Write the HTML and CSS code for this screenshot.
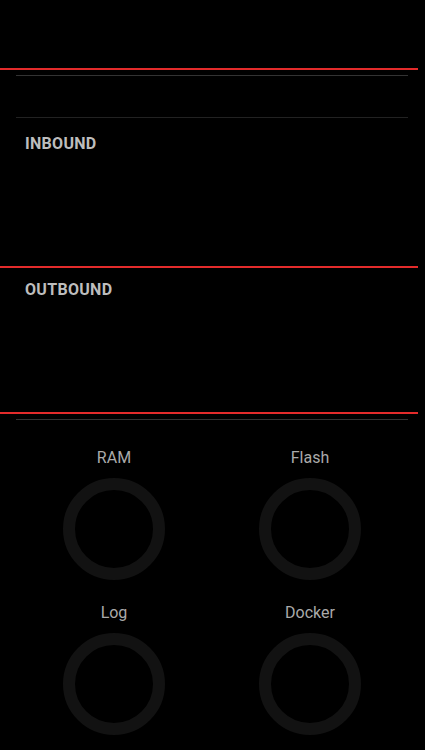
FILE: index.html
```html
<!DOCTYPE html>
<html lang="en">
<head>
<meta charset="utf-8">
<title>Router status</title>
<link rel="stylesheet" href="styles.css">
</head>
<body>
  <div class="page">
    <div class="top-space"></div>
    <div class="accent-rule"></div>
    <div class="divider divider--first"></div>
    <div class="summary"></div>
    <div class="divider divider--dim"></div>

    <section class="traffic traffic--in">
      <h2 class="traffic__title">INBOUND</h2>
    </section>
    <div class="accent-rule"></div>

    <section class="traffic traffic--out">
      <h2 class="traffic__title">OUTBOUND</h2>
    </section>
    <div class="accent-rule"></div>
    <div class="divider divider--first"></div>

    <div class="gauges">
      <div class="gauge">
        <span class="gauge__label">RAM</span>
        <svg class="gauge__ring" width="102" height="102" viewBox="0 0 102 102"><circle cx="51" cy="51" r="45" /></svg>
      </div>
      <div class="gauge">
        <span class="gauge__label">Flash</span>
        <svg class="gauge__ring" width="102" height="102" viewBox="0 0 102 102"><circle cx="51" cy="51" r="45" /></svg>
      </div>
      <div class="gauge">
        <span class="gauge__label">Log</span>
        <svg class="gauge__ring" width="102" height="102" viewBox="0 0 102 102"><circle cx="51" cy="51" r="45" /></svg>
      </div>
      <div class="gauge">
        <span class="gauge__label">Docker</span>
        <svg class="gauge__ring" width="102" height="102" viewBox="0 0 102 102"><circle cx="51" cy="51" r="45" /></svg>
      </div>
    </div>
  </div>
</body>
</html>
```

FILE: styles.css
```css
html, body {
  margin: 0;
  padding: 0;
  background: #000;
}

body {
  font-family: Roboto, "Liberation Sans", Arial, sans-serif;
  color: #aaa;
  overflow: hidden;
}

.page {
  width: 425px;
  height: 750px;
}

.top-space {
  height: 68px;
}

.accent-rule {
  width: 418px;
  height: 2px;
  background: #e32b2b;
}

.divider {
  margin: 0 17px 0 16px;
  height: 1px;
  background: #333;
}

.divider--first {
  margin-top: 5px;
}

.divider--dim {
  background: #222;
}

.summary {
  height: 41px;
}

.traffic {
  box-sizing: border-box;
  padding: 16px 25px 0;
}

.traffic--in {
  height: 148px;
}

.traffic--out {
  height: 144px;
  padding-top: 12px;
}

.traffic__title {
  margin: 0;
  font-size: 16px;
  line-height: 19px;
  font-weight: 700;
  letter-spacing: 0.3px;
  color: #bdbdbd;
}

.gauges {
  margin: 28px 17px 0 16px;
  display: grid;
  grid-template-columns: 1fr 1fr;
  row-gap: 23px;
}

.gauge {
  display: flex;
  flex-direction: column;
  align-items: center;
  gap: 11px;
}

.gauge__label {
  font-size: 16px;
  line-height: 19px;
  color: #aaa;
}

.gauge__ring {
  display: block;
}

.gauge__ring circle {
  fill: none;
  stroke: #121212;
  stroke-width: 12;
}
```
